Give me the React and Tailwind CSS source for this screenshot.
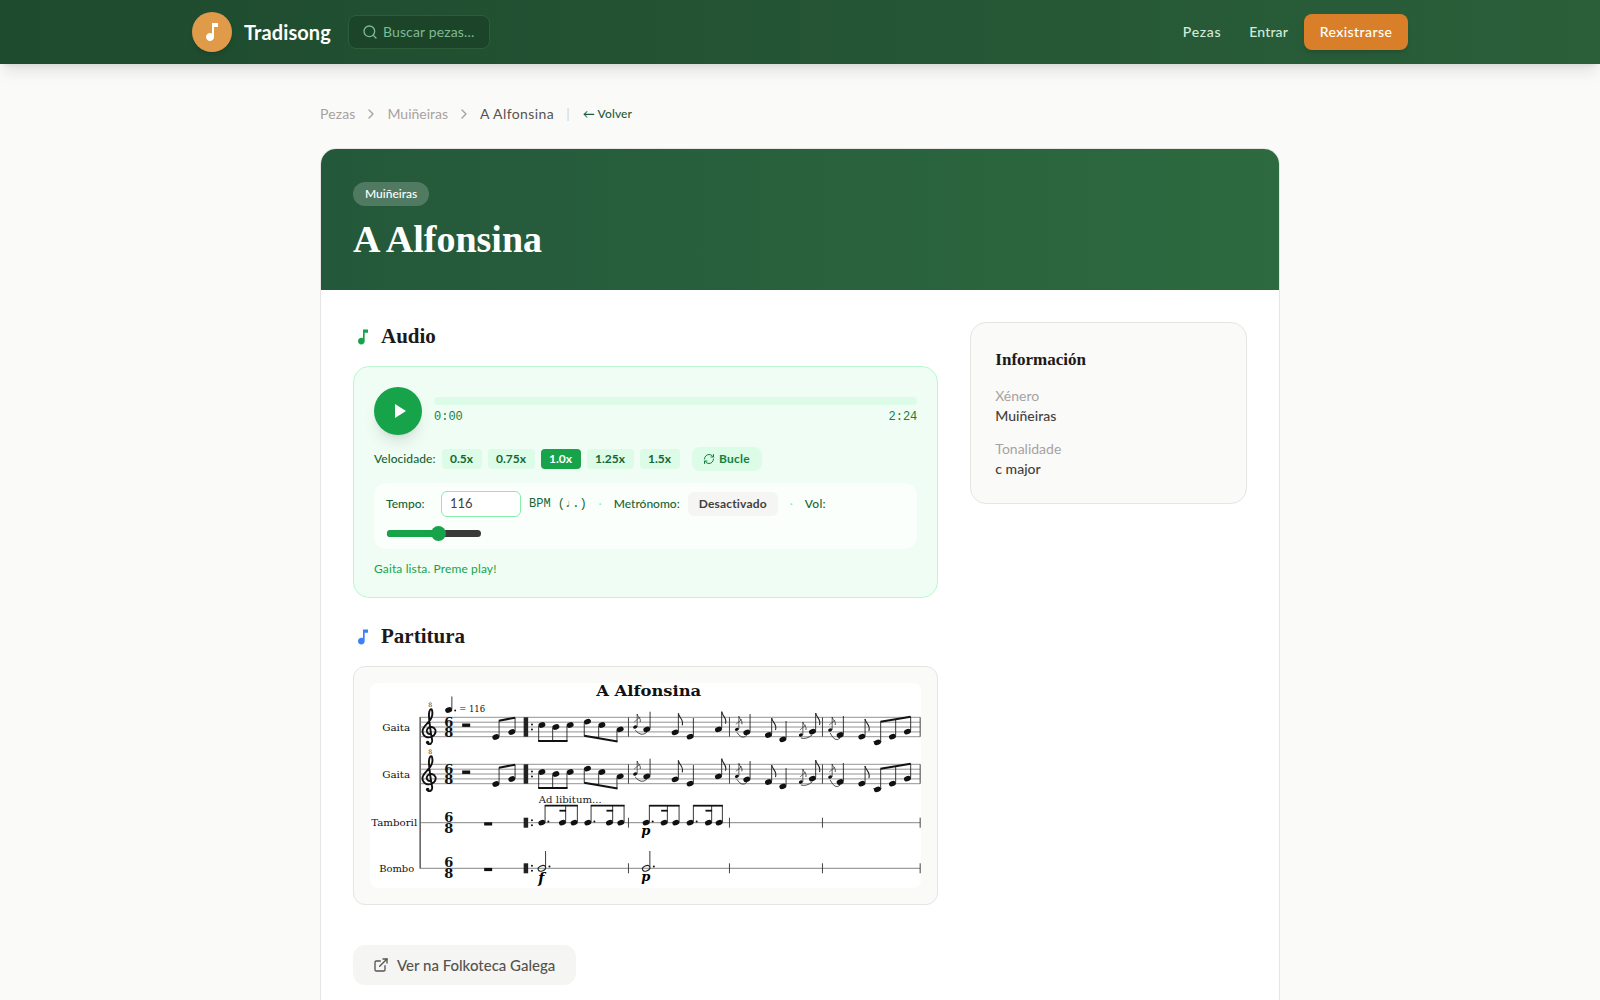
import React from 'react';
import { Search, ChevronRight, RefreshCw, ExternalLink } from 'lucide-react';

const SERIF = '"DejaVu Serif", "Liberation Serif", serif';

function MusicNote({ className }) {
  return (
    <svg viewBox="0 0 24 24" fill="currentColor" className={className}>
      <path d="M12 3v10.55c-.59-.34-1.27-.55-2-.55-2.21 0-4 1.79-4 4s1.79 4 4 4 4-1.79 4-4V7h4V3h-6z" />
    </svg>
  );
}

function Head({ x, y, small, hollow }) {
  const rx = small ? 2.1 : 3.6;
  const ry = small ? 1.5 : 2.6;
  if (hollow) {
    return <ellipse cx={x} cy={y} rx={rx + 0.3} ry={ry} fill="none" stroke="#222" strokeWidth="1.1" transform={`rotate(-22 ${x} ${y})`} />;
  }
  return <ellipse cx={x} cy={y} rx={rx} ry={ry} fill="#111" transform={`rotate(-22 ${x} ${y})`} />;
}

// quarter or eighth note, stem up
function Note({ x, y, top, flag }) {
  return (
    <g>
      <Head x={x} y={y} />
      <line x1={x + 3.2} y1={y - 1} x2={x + 3.2} y2={top} stroke="#222" strokeWidth="0.9" />
      {flag && <path d={`M${x + 3.2} ${top} C${x + 4} ${top + 5} ${x + 9} ${top + 6} ${x + 7} ${top + 12}`} fill="none" stroke="#222" strokeWidth="1.1" />}
    </g>
  );
}

function Grace({ x, y, toX, toY }) {
  return (
    <g>
      <Head x={x} y={y} small />
      <line x1={x + 2} y1={y} x2={x + 2} y2={y - 13} stroke="#222" strokeWidth="0.7" />
      <path d={`M${x + 2} ${y - 13} C${x + 3} ${y - 9} ${x + 6} ${y - 9} ${x + 5} ${y - 5}`} fill="none" stroke="#222" strokeWidth="0.8" />
      <line x1={x - 1} y1={y - 5} x2={x + 5} y2={y - 10} stroke="#222" strokeWidth="0.6" />
      <path d={`M${x} ${y + 3} Q${(x + toX) / 2} ${toY + 8} ${toX} ${toY + 3}`} fill="none" stroke="#222" strokeWidth="0.8" />
    </g>
  );
}

function TrebleClef() {
  return (
    <g fill="none" stroke="#111">
      <path strokeWidth="1.9" d="M60.5 51 C57 51.5 55.5 48 57.5 45.5 C59.5 43 64 43.5 65.3 47 C66.3 50.8 62.8 54.4 58.5 54.4 C53.6 54.4 51.6 50 52.6 46.5 C53.8 42.6 58 40 60 37 C62 34 62.8 30 61.8 27 C60.7 25 59 27 58.8 31 C58.6 35 60.5 50 62 57 C62.5 60.5 59.5 62 57.5 60.5" />
      <circle cx="57.5" cy="59.5" r="1.8" fill="#111" stroke="none" />
      <text x="58" y="23.5" fontSize="6" fill="#222" stroke="none" fontFamily={SERIF}>8</text>
    </g>
  );
}

const bars = [258.3, 359.3, 452.3, 550];

function TimeSig({ y6, y8 }) {
  return (
    <g fontSize="13" fontWeight="700" textAnchor="middle" fontFamily={SERIF} fill="#111">
      <text x="78.5" y={y6}>6</text>
      <text x="78.5" y={y8}>8</text>
    </g>
  );
}

function PipeStaff({ dy }) {
  const lines = [34.3, 39.2, 44, 48.9, 53.7];
  return (
    <g transform={`translate(0 ${dy})`}>
      {lines.map((y) => (
        <line key={y} x1="50" x2="550" y1={y} y2={y} stroke="#777" strokeWidth="0.8" />
      ))}
      {bars.map((x) => (
        <line key={x} x1={x} x2={x} y1="34.3" y2="53.7" stroke="#444" strokeWidth="1" />
      ))}
      <TrebleClef />
      <TimeSig y6={44} y8={54} />
      <rect x="92" y="40.5" width="8" height="3.4" fill="#111" />
      <Note x={125.7} y={54} top={37.7} />
      <Note x={141.7} y={49} top={34.7} />
      <line x1="128.7" y1="37.7" x2="144.9" y2="34.7" stroke="#111" strokeWidth="2" />
      <rect x="153.5" y="34.3" width="4.5" height="19.4" fill="#222" />
      <circle cx="161.8" cy="41.5" r="1" fill="#111" />
      <circle cx="161.8" cy="46.5" r="1" fill="#111" />
      {[[171.7, 42], [185.7, 44], [200, 42]].map(([x, y]) => (
        <g key={x}>
          <Head x={x} y={y} />
          <line x1={x - 3.2} y1={y + 1} x2={x - 3.2} y2="58" stroke="#222" strokeWidth="0.9" />
        </g>
      ))}
      <line x1="168" y1="58" x2="197.4" y2="58" stroke="#111" strokeWidth="2" />
      {[[217.3, 38.7, 53.2], [231.7, 42, 55.6], [250, 46.3, 58.4]].map(([x, y, end]) => (
        <g key={x}>
          <Head x={x} y={y} />
          <line x1={x - 3.2} y1={y + 1} x2={x - 3.2} y2={end} stroke="#222" strokeWidth="0.9" />
        </g>
      ))}
      <line x1="214" y1="52.7" x2="247.4" y2="58.4" stroke="#111" strokeWidth="2" />
      <Grace x={265} y={44} toX={276.7} toY={46.3} />
      <Note x={276.7} y={46.3} top={28.7} />
      <Note x={305} y={49.3} top={30.3} flag />
      <Note x={320} y={53.7} top={35} />
      <Note x={348.3} y={46.3} top={28.7} flag />
      <Grace x={366.7} y={46.3} toX={376.7} toY={49.3} />
      <Note x={376.7} y={49.3} top={31} />
      <Note x={398.3} y={52} top={35} flag />
      <Note x={412.7} y={56.3} top={38} />
      <Grace x={430.7} y={52} toX={442.3} toY={48.7} />
      <Note x={442.3} y={48.7} top={30} flag />
      <Grace x={460} y={47} toX={470} toY={52} />
      <Note x={470} y={52} top={33} />
      <Note x={491.7} y={53.7} top={36} flag />
      <line x1="503" y1="58.6" x2="511.5" y2="58.6" stroke="#333" strokeWidth="0.8" />
      <Note x={507.3} y={59.3} top={38.7} />
      <Note x={522.3} y={53.7} top={36} />
      <Note x={537.3} y={48.7} top={33.7} />
      <line x1="510.3" y1="38.7" x2="540.5" y2="33.7" stroke="#111" strokeWidth="2" />
    </g>
  );
}

function TamborilGroup({ xs }) {
  const [a, b, c] = xs;
  return (
    <g>
      {xs.map((x) => (
        <g key={x}>
          <Head x={x} y={139.7} />
          <line x1={x + 3.2} y1="139" x2={x + 3.2} y2="122" stroke="#222" strokeWidth="0.9" />
        </g>
      ))}
      <circle cx={a + 6.5} cy="138.5" r="1" fill="#111" />
      <line x1={a + 3} x2={c + 3.6} y1="122.7" y2="122.7" stroke="#111" strokeWidth="1.8" />
      <line x1={b - 3} x2={b + 3.6} y1="127.7" y2="127.7" stroke="#111" strokeWidth="1.8" />
    </g>
  );
}

function LowerStaff({ y }) {
  return (
    <g>
      <line x1="50" x2="550" y1={y} y2={y} stroke="#666" strokeWidth="0.8" />
      {bars.map((x) => (
        <line key={x} x1={x} x2={x} y1={y - 5} y2={y + 5} stroke="#444" strokeWidth="1" />
      ))}
      <TimeSig y6={y - 1} y8={y + 10} />
      <rect x="114" y={y - 0.4} width="8" height="3.2" fill="#111" />
      <rect x="153.5" y={y - 5} width="4.5" height="10" fill="#222" />
      <circle cx="161.8" cy={y - 2.5} r="1" fill="#111" />
      <circle cx="161.8" cy={y + 2.5} r="1" fill="#111" />
    </g>
  );
}

function ScoreImage() {
  const label = { fontSize: 9.5, fontFamily: SERIF, fill: '#111', lengthAdjust: 'spacingAndGlyphs' };
  return (
    <svg viewBox="0 0 551 205" className="block w-full h-[205px]">
      <text x="226" y="12.5" fontSize="15" fontWeight="700" fontFamily={SERIF} textLength="105" lengthAdjust="spacingAndGlyphs" fill="#111">A Alfonsina</text>
      <Head x={78.5} y={27} />
      <line x1="81.7" x2="81.7" y1="26" y2="13.5" stroke="#222" strokeWidth="0.9" />
      <circle cx="85" cy="27.5" r="0.9" fill="#111" />
      <text x="89" y="29" fontSize="9.5" fontFamily={SERIF} fill="#111" textLength="26" lengthAdjust="spacingAndGlyphs">= 116</text>
      <rect x="49.2" y="34" width="1.6" height="151.5" fill="#666" />
      <text x="12" y="47.5" {...label} textLength="28">Gaita</text>
      <text x="12" y="94.5" {...label} textLength="28">Gaita</text>
      <text x="1" y="143" {...label} textLength="46">Tamboril</text>
      <text x="9" y="189" {...label} textLength="35">Bombo</text>
      <PipeStaff dy={0} />
      <PipeStaff dy={47} />
      <LowerStaff y={139.7} />
      <LowerStaff y={185.3} />
      <text x="168.5" y="119.5" fontSize="9.5" fontFamily={SERIF} fill="#222" textLength="63" lengthAdjust="spacingAndGlyphs">Ad libitum...</text>
      <TamborilGroup xs={[171.7, 192.3, 204]} />
      <TamborilGroup xs={[217.7, 239.3, 250.7]} />
      <TamborilGroup xs={[276, 294, 305.7]} />
      <TamborilGroup xs={[320, 338.3, 349]} />
      <text x="271" y="152" fontSize="13" fontWeight="700" fontStyle="italic" fontFamily={SERIF}>p</text>
      <Head x={171.7} y={185.3} hollow />
      <line x1="175.4" x2="175.4" y1="184.5" y2="168" stroke="#222" strokeWidth="0.9" />
      <circle cx="179.3" cy="183.5" r="1" fill="#111" />
      <text x="168" y="200" fontSize="14" fontWeight="700" fontStyle="italic" fontFamily={SERIF}>f</text>
      <Head x={276} y={185.3} hollow />
      <line x1="279.7" x2="279.7" y1="184.5" y2="168" stroke="#222" strokeWidth="0.9" />
      <circle cx="283.7" cy="183.5" r="1" fill="#111" />
      <text x="271" y="198" fontSize="13" fontWeight="700" fontStyle="italic" fontFamily={SERIF}>p</text>
    </svg>
  );
}

const speeds = [
  { label: '0.5x', w: 'w-10' },
  { label: '0.75x', w: 'w-[47px]' },
  { label: '1.0x', w: 'w-10', active: true },
  { label: '1.25x', w: 'w-[47px]' },
  { label: '1.5x', w: 'w-10' }
];

export default function App() {
  return (
    <div className="h-[1000px] overflow-hidden bg-[#fafaf9] font-['Lato','Noto_Sans',sans-serif] text-[#292524]">
      {/* Header */}
      <header className="h-16 bg-gradient-to-r from-[#1e4a2e] to-[#2a5f3a] shadow-lg relative">
        <div className="max-w-7xl mx-auto px-8 h-full flex items-center">
          <div className="w-10 h-10 rounded-full bg-[#e09b4a] flex items-center justify-center text-white shadow-md">
            <MusicNote className="w-6 h-6" />
          </div>
          <span className="ml-3 text-xl font-bold text-white tracking-[0.005em]">Tradisong</span>
          <div className="ml-[17px] w-[142px] h-[34px] rounded-lg bg-[#1c4429] border border-[#2a5f3a] flex items-center pl-[13px] gap-[5px]">
            <Search size={16} className="text-[#7dbb92]" />
            <span className="text-sm text-[#7dbb92] tracking-[0.01em]">Buscar pezas...</span>
          </div>
          <nav className="ml-auto flex items-center">
            <span className="text-sm font-medium text-[#d3ecd9] tracking-[0.05em]">Pezas</span>
            <span className="ml-[28px] text-sm font-medium text-[#d3ecd9] tracking-[0.01em]">Entrar</span>
            <span className="ml-4 w-[104px] h-9 rounded-lg bg-[#d97f2a] text-white text-sm font-medium tracking-[0.03em] flex items-center justify-center shadow-md">Rexistrarse</span>
          </nav>
        </div>
      </header>

      <main className="max-w-5xl mx-auto px-8 pt-10">
        {/* Breadcrumb */}
        <div className="h-5 mb-6 flex items-center text-sm text-[#a8a29e]">
          <span className="tracking-[0.01em]">Pezas</span>
          <ChevronRight size={16} className="mx-2" />
          <span>Muiñeiras</span>
          <ChevronRight size={16} className="mx-2" />
          <span className="text-[#57534e] tracking-[0.03em]">A Alfonsina</span>
          <span className="mx-3 text-[#d6d3d1]">|</span>
          <span className="ml-[1px] text-xs font-medium text-[#1e5a3a] tracking-[0.01em]">← Volver</span>
        </div>

        {/* Card */}
        <div className="rounded-2xl border border-[#e7e5e4] bg-white overflow-hidden">
          <div className="h-[141px] px-8 pt-[31px] bg-gradient-to-r from-[#24583a] to-[#2d6a3f]">
            <span className="inline-flex items-center h-6 px-3 rounded-full bg-white/20 text-xs font-medium text-white">Muiñeiras</span>
            <h1 className="mt-[11px] h-11 text-[38px] leading-[44px] font-bold text-white font-['Liberation_Serif',serif]">A Alfonsina</h1>
          </div>

          <div className="p-8 grid grid-cols-3 gap-8">
            <div className="col-span-2">
              {/* Audio */}
              <div className="mt-px h-7 mb-[15px] flex items-center gap-2">
                <MusicNote className="w-5 h-5 text-[#16a34a]" />
                <h2 className="text-[21px] font-bold text-[#1c1917] font-['Liberation_Serif',serif]">Audio</h2>
              </div>
              <div className="rounded-2xl border border-[#bbf7d0] bg-[#f0fdf4] p-5 pb-0 h-[232px]">
                <div className="flex items-start gap-3">
                  <button className="w-12 h-12 shrink-0 rounded-full bg-[#16a34a] flex items-center justify-center text-white shadow-lg pl-0.5">
                    <svg viewBox="0 0 24 24" fill="currentColor" className="w-6 h-6">
                      <path d="M8 5v14l11-7z" />
                    </svg>
                  </button>
                  <div className="flex-1 pt-[10px]">
                    <div className="h-2 rounded-full bg-[#dcfce7]" />
                    <div className="mt-1 flex justify-between font-['Liberation_Mono',monospace] text-xs text-[#15803d]">
                      <span>0:00</span>
                      <span>2:24</span>
                    </div>
                  </div>
                </div>

                <div className="mt-3 h-6 flex items-center text-xs">
                  <span className="text-[#166534] font-medium mr-[6px] tracking-[0.005em]">Velocidade:</span>
                  <div className="flex gap-[6px]">
                    {speeds.map((s) => (
                      <span
                        key={s.label}
                        className={`h-5 ${s.w} rounded flex items-center justify-center font-bold ${s.active ? 'bg-[#16a34a] text-white' : 'bg-[#dcfce7] text-[#166534]'}`}
                      >
                        {s.label}
                      </span>
                    ))}
                  </div>
                  <span className="ml-3 h-6 w-[70px] rounded-lg bg-[#dcfce7] text-[#15803d] font-bold tracking-[0.02em] flex items-center justify-center gap-1">
                    <RefreshCw size={12} />
                    Bucle
                  </span>
                </div>

                <div className="mt-3 h-[66px] rounded-xl bg-white/70 px-3 pt-2 text-xs">
                  <div className="flex items-center h-[26px]">
                    <span className="text-[#166534] font-medium w-[55px]">Tempo:</span>
                    <div className="w-20 h-[26px] rounded-md border border-[#86efac] bg-white flex items-center pl-2 text-[#44403c] text-[13px]">116</div>
                    <span className="ml-2 font-['Liberation_Mono',monospace] text-[#166534]">BPM (♩.)</span>
                    <span className="ml-3 text-[#86efac]">·</span>
                    <span className="ml-3 text-[#166534] font-medium">Metrónomo:</span>
                    <span className="ml-2 w-[90px] h-6 rounded-md bg-[#f5f5f4] text-[#44403c] font-bold tracking-[0.015em] flex items-center justify-center">Desactivado</span>
                    <span className="ml-3 text-[#86efac]">·</span>
                    <span className="ml-3 text-[#166534] font-medium tracking-[0.02em]">Vol:</span>
                  </div>
                  <div className="relative mt-[13px] ml-px w-[94px] h-[7px] rounded-full bg-[#3a3a3a]">
                    <div className="h-full w-[55%] rounded-l-full bg-[#16a34a]" />
                    <div className="absolute left-[44px] top-[-4px] w-[15px] h-[15px] rounded-full bg-[#16a34a]" />
                  </div>
                </div>

                <p className="mt-3 text-xs text-[#16a34a] tracking-[0.01em]">Gaita lista. Preme play!</p>
              </div>

              {/* Partitura */}
              <div className="mt-[25px] h-7 mb-[15px] flex items-center gap-2">
                <MusicNote className="w-5 h-5 text-[#3b82f6]" />
                <h2 className="text-[21px] font-bold text-[#1c1917] font-['Liberation_Serif',serif]">Partitura</h2>
              </div>
              <div className="rounded-xl border border-[#e7e5e4] bg-[#fafaf9] p-4">
                <div className="rounded-lg bg-white overflow-hidden">
                  <ScoreImage />
                </div>
              </div>

              <button className="mt-10 h-10 w-[223px] rounded-xl bg-[#f5f5f4] text-[#57534e] text-[15px] font-medium flex items-center pl-5 gap-2">
                <ExternalLink size={16} />
                Ver na Folkoteca Galega
              </button>
            </div>

            {/* Sidebar */}
            <aside>
              <div className="rounded-2xl border border-[#e7e5e4] bg-[#fafaf9] px-6 pt-[23px] h-[182px]">
                <h3 className="text-[17px] leading-7 font-bold text-[#1c1917] font-['Liberation_Serif',serif]">Información</h3>
                <p className="mt-3 text-sm leading-5 text-[#a8a29e]">Xénero</p>
                <p className="text-sm leading-5 font-medium text-[#44403c]">Muiñeiras</p>
                <p className="mt-[13px] text-sm leading-5 text-[#a8a29e]">Tonalidade</p>
                <p className="text-sm leading-5 font-medium text-[#44403c]">c major</p>
              </div>
            </aside>
          </div>
        </div>
      </main>
    </div>
  );
}
